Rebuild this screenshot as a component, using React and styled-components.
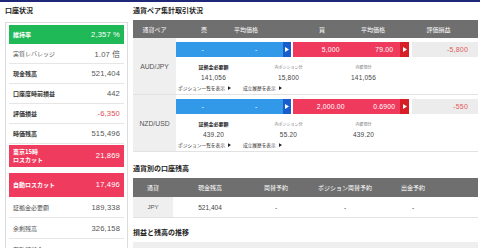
import React from 'react';
import styled, { createGlobalStyle } from 'styled-components';

const GlobalStyle = createGlobalStyle`
  html, body {
    margin: 0;
    padding: 0;
    background: #fff;
  }
  body {
    width: 480px;
    height: 248px;
    overflow: hidden;
    font-family: "Noto Sans CJK JP", "Noto Sans", sans-serif;
    color: #333;
  }
`;

const num = `"Liberation Sans", "Noto Sans CJK JP", sans-serif`;

// data
const account = [
    { label: '実質レバレッジ', value: '1.07 倍' },
    { label: '現金残高', value: '521,404', bold: true },
    { label: '口座度時前損益', value: '442', bold: true },
    { label: '評価損益', value: '-6,350', bold: true, minus: true },
    { label: '時価残高', value: '515,496', bold: true },
];

const account2 = [
    { label: '証拠金必要額', value: '189,338' },
    { label: '余剰残高', value: '326,158' },
    { label: '有効証拠金', value: '' },
];

const pairs = [
    {
        pair: 'AUD/JPY',
        sell: ['-', '-'],
        buy: ['5,000', '79.00'],
        pl: '-5,800',
        info: ['141,056', '15,800', '141,056'],
    },
    {
        pair: 'NZD/USD',
        sell: ['-', '-'],
        buy: ['2,000.00', '0.6900'],
        pl: '-550',
        info: ['439.20', '55.20', '439.20'],
    },
];

const Arrow = ({ color = '#fff', size = 4 }) => (
    <svg width={size} height={size + 1} viewBox="0 0 4 5">
        <polygon points="0,0 4,2.5 0,5" fill={color} />
    </svg>
);

const App = () => {
    return (
        <>
            <GlobalStyle />
            <Page>
                <Side>
                    <Title>口座状況</Title>
                    <AccountBox>
                        <ColorRow $bg="#1fb957" $h={19}>
                            <span>維持率</span>
                            <Value $light>2,357 %</Value>
                        </ColorRow>
                        {account.map((r) => (
                            <Row key={r.label}>
                                <Label $bold={r.bold}>{r.label}</Label>
                                <Value $minus={r.minus}>{r.value}</Value>
                            </Row>
                        ))}
                        <ColorRow $bg="#ef3b5e" $h={22} $mt={1}>
                            <span>東京15時<br />ロスカット</span>
                            <Value $light>21,869</Value>
                        </ColorRow>
                        <ColorRow $bg="#ef3b5e" $h={24} $mt={6}>
                            <span>自動ロスカット</span>
                            <Value $light>17,496</Value>
                        </ColorRow>
                        {account2.map((r) => (
                            <Row key={r.label} $h={21}>
                                <Label>{r.label}</Label>
                                <Value>{r.value}</Value>
                            </Row>
                        ))}
                    </AccountBox>
                </Side>

                <Main>
                    <Title>通貨ペア集計取引状況</Title>
                    <PairHead>
                        <span>通貨ペア</span>
                        <span>売</span>
                        <span className="left">平均価格</span>
                        <span>買</span>
                        <span>平均価格</span>
                        <span>評価損益</span>
                    </PairHead>
                    {pairs.map((p) => (
                        <PairRow key={p.pair}>
                            <PairName>{p.pair}</PairName>
                            <Detail>
                                <Bar>
                                    <Side2 $bg="#3298e8" $w={115}>
                                        <Cell>{p.sell[0]}</Cell>
                                        <Cell>{p.sell[1]}</Cell>
                                        <Tab $bg="#1b5ccd" $w={8}><Arrow /></Tab>
                                    </Side2>
                                    <Side2 $bg="#ef3a5e" $w={116}>
                                        <Cell $pad={22}>{p.buy[0]}</Cell>
                                        <Cell $pad={22}>{p.buy[1]}</Cell>
                                        <Tab $bg="#d81e26" $w={9}><Arrow /></Tab>
                                    </Side2>
                                    <PL>{p.pl}</PL>
                                </Bar>
                                <Info>
                                    <InfoLabel $bold>証拠金必要額</InfoLabel>
                                    <InfoLabel>内ポジション分</InfoLabel>
                                    <InfoLabel>内新規分</InfoLabel>
                                    {p.info.map((v, i) => (
                                        <InfoValue key={i}>{v}</InfoValue>
                                    ))}
                                </Info>
                                <Links>
                                    <Link>ポジション一覧を表示 <Arrow color="#222" size={3} /></Link>
                                    <Link>成立履歴を表示 <Arrow color="#222" size={3} /></Link>
                                </Links>
                            </Detail>
                        </PairRow>
                    ))}

                    <Title $mt={8}>通貨別の口座残高</Title>
                    <CurHead>
                        <span>通貨</span>
                        <span>現金残高</span>
                        <span>両替予約</span>
                        <span>ポジション両替予約</span>
                        <span>出金予約</span>
                        <span />
                    </CurHead>
                    <CurRow>
                        <span className="cur">JPY</span>
                        <span>521,404</span>
                        <span>-</span>
                        <span>-</span>
                        <span>-</span>
                        <span />
                    </CurRow>

                    <Title $mt={6}>損益と残高の推移</Title>
                    <ChartBox />
                </Main>
            </Page>
        </>
    );
};

// Styled components

const Page = styled.div`
    border-top: 2px solid #1f2878;
    display: flex;
    height: 246px;
    overflow: hidden;
`;

const Side = styled.aside`
    flex: none;
    width: 123px;
    margin-left: 5px;
`;

const Main = styled.main`
    flex: none;
    width: 345px;
    margin-left: 5px;
`;

const Title = styled.h2`
    margin: ${(p) => p.$mt || 0}px 0 0;
    height: 18px;
    line-height: 16px;
    font-size: 7px;
    font-weight: bold;
    color: #222;
    white-space: nowrap;

    ${Side} & {
        height: 20px;
    }
`;

const AccountBox = styled.div`
    border: 1px solid #dcdcdc;
    border-bottom: none;
    padding: 2px 3px 0;
`;

const Row = styled.div`
    box-sizing: border-box;
    height: ${(p) => p.$h || 20}px;
    display: flex;
    align-items: center;
    justify-content: space-between;
    padding: 0 4px;
    border-bottom: 1px solid #e6e6e6;
`;

const ColorRow = styled(Row)`
    height: ${(p) => p.$h}px;
    margin-top: ${(p) => p.$mt || 0}px;
    border-bottom: none;
    background: ${(p) => p.$bg};
    color: #fff;
    font-size: 6px;
    line-height: 8px;
    font-weight: bold;
`;

const Label = styled.span`
    font-size: 6px;
    font-weight: ${(p) => (p.$bold ? 'bold' : 'normal')};
    color: ${(p) => (p.$bold ? '#333' : '#555')};
    white-space: nowrap;
`;

const Value = styled.span`
    font-family: ${num};
    font-size: 7.6px;
    font-weight: normal;
    letter-spacing: 0.15px;
    color: ${(p) => (p.$light ? '#fff' : p.$minus ? '#e5474f' : '#555')};
`;

const headBase = `
    background: #6f6f6f;
    color: #fff;
    font-size: 6px;
    display: grid;
    align-items: center;
    text-align: center;
    white-space: nowrap;
`;

const PairHead = styled.div`
    ${headBase}
    height: 18px;
    grid-template-columns: 43px 56px 65px 50px 52px 1fr;

    .left {
        text-align: left;
        padding-left: 2px;
    }
`;

const PairRow = styled.div`
    box-sizing: border-box;
    height: 57px;
    display: grid;
    grid-template-columns: 43px 1fr;
    border-bottom: 1px solid #e2e2e2;
`;

const PairName = styled.div`
    background: #efefef;
    color: #555;
    font-family: ${num};
    font-size: 6.8px;
    display: flex;
    align-items: center;
    justify-content: center;
`;

const Detail = styled.div`
    padding-top: 4px;
`;

const Bar = styled.div`
    display: flex;
    gap: 2px;
    height: 15px;
`;

const Side2 = styled.div`
    flex: none;
    width: ${(p) => p.$w}px;
    display: flex;
    background: ${(p) => p.$bg};
`;

const Cell = styled.div`
    flex: 1;
    display: flex;
    align-items: center;
    justify-content: center;
    padding-left: ${(p) => p.$pad || 0}px;
    color: #fff;
    font-family: ${num};
    font-size: 6.8px;
    letter-spacing: 0.2px;
    white-space: nowrap;
`;

const Tab = styled.div`
    flex: none;
    width: ${(p) => p.$w}px;
    background: ${(p) => p.$bg};
    display: flex;
    align-items: center;
    justify-content: center;
`;

const PL = styled.div`
    flex: 1;
    margin-left: 1px;
    background: #ececec;
    display: flex;
    align-items: center;
    justify-content: flex-end;
    padding-right: 10px;
    color: #e35a5a;
    font-family: ${num};
    font-size: 7px;
    letter-spacing: 0.2px;
`;

const Info = styled.div`
    display: grid;
    grid-template-columns: repeat(3, 75px);
    grid-template-rows: 6px 10px;
    row-gap: 3px;
    margin-top: 7px;
    text-align: center;
`;

const InfoLabel = styled.div`
    font-size: ${(p) => (p.$bold ? 5 : 4)}px;
    line-height: 6px;
    font-weight: ${(p) => (p.$bold ? 'bold' : 'normal')};
    color: ${(p) => (p.$bold ? '#222' : '#777')};
    white-space: nowrap;
`;

const InfoValue = styled.div`
    font-family: ${num};
    font-size: 6.5px;
    line-height: 10px;
    letter-spacing: 0.2px;
    color: #444;
`;

const Links = styled.div`
    display: flex;
    gap: 12px;
    height: 10px;
    align-items: center;
    padding-left: 2px;
`;

const Link = styled.span`
    display: flex;
    align-items: center;
    gap: 3px;
    font-size: 4.7px;
    color: #333;
    white-space: nowrap;
`;

const CurHead = styled.div`
    ${headBase}
    height: 19px;
    grid-template-columns: 40px 74px 58px 80px 56px 1fr;
`;

const CurRow = styled.div`
    box-sizing: border-box;
    height: 21px;
    display: grid;
    grid-template-columns: 40px 74px 58px 80px 56px 1fr;
    border-bottom: 1px solid #e2e2e2;
    text-align: center;
    font-family: ${num};
    font-size: 6.5px;
    color: #444;

    span {
        display: flex;
        align-items: center;
        justify-content: center;
    }

    .cur {
        background: #efefef;
        color: #555;
        font-size: 6px;
    }
`;

const ChartBox = styled.div`
    height: 20px;
    background: #efefef;
`;

export default App;
